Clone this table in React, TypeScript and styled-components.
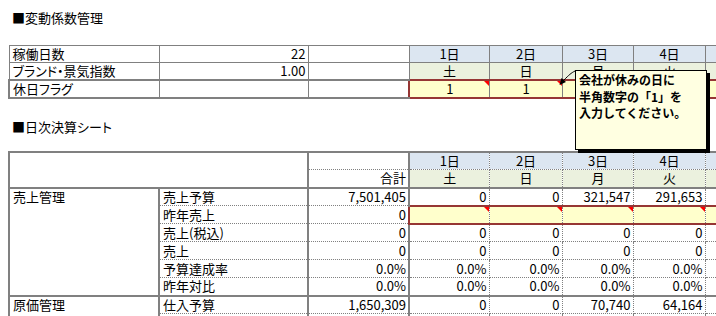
import styled, { createGlobalStyle, css } from 'styled-components'

const GRAY = '#808080'
const RED_LINE = '#963634'
const BLUE = '#dce6f1'
const GREEN = '#ebf1de'
const YELLOW = '#ffffcc'
const COLS = [150, 149, 101, 80, 73, 71, 72, 72]

const EDGES = {
  thin: `1px solid ${GRAY}`,
  thick: `2px solid ${GRAY}`,
  dot: `1px dotted ${GRAY}`,
  red: `2px solid ${RED_LINE}`,
  none: 'none',
}
type Edge = keyof typeof EDGES

const GlobalStyle = createGlobalStyle`
  html, body {
    margin: 0;
    padding: 0;
    background: #fff;
    overflow: hidden;
  }
  body {
    font-family: "Noto Sans CJK JP", "Noto Sans", sans-serif;
    font-size: 13px;
    color: #000;
  }
`

const Sheet = styled.div`
  position: relative;
  width: 716px;
  height: 316px;
  overflow: hidden;
  box-sizing: border-box;
  padding: 9px 0 0 8px;
`

const Heading = styled.div<{ $top: number; $bottom: number }>`
  height: 18px;
  line-height: 18px;
  padding-left: 4px;
  margin: ${(p) => p.$top}px 0 ${(p) => p.$bottom}px;
  font-feature-settings: 'palt';
  white-space: nowrap;
`

const Grid = styled.table<{ $dotted?: boolean }>`
  border-collapse: collapse;
  table-layout: fixed;
  width: ${COLS.reduce((a, b) => a + b, 0)}px;

  td {
    border: 1px ${(p) => (p.$dotted ? 'dotted' : 'solid')} ${GRAY};
  }
`

const Row = styled.tr<{ $h?: number }>`
  height: ${(p) => p.$h ?? 18}px;
`

interface CellProps {
  $t?: Edge
  $b?: Edge
  $l?: Edge
  $r?: Edge
  $bg?: string
  $align?: 'left' | 'right' | 'center'
  $mark?: boolean
  $top?: boolean
}

const Cell = styled.td<CellProps>`
  && {
    ${(p) => p.$t && `border-top: ${EDGES[p.$t]};`}
    ${(p) => p.$b && `border-bottom: ${EDGES[p.$b]};`}
    ${(p) => p.$l && `border-left: ${EDGES[p.$l]};`}
    ${(p) => p.$r && `border-right: ${EDGES[p.$r]};`}
  }
  position: relative;
  padding: 0 2px 0 3px;
  line-height: 14px;
  text-align: ${(p) => p.$align ?? 'left'};
  vertical-align: ${(p) => (p.$top ? 'top' : 'middle')};
  background: ${(p) => p.$bg ?? '#fff'};
  white-space: nowrap;
  font-feature-settings: 'palt';

  ${(p) =>
    p.$top &&
    css`
      padding-top: 1px;
    `}

  ${(p) =>
    p.$mark &&
    css`
      &::after {
        content: '';
        position: absolute;
        top: 0;
        right: 0;
        border-top: 5px solid #ff0000;
        border-left: 5px solid transparent;
      }
    `}
`

const Note = styled.div`
  position: absolute;
  left: 575px;
  top: 70px;
  width: 127px;
  height: 77px;
  border: 1px solid #000;
  background: #ffffe1;
  box-shadow: 3px 3px 0 #000;
  padding: 1px 0 0 3px;
  font-size: 12px;
  font-weight: bold;
  line-height: 16.5px;
  white-space: nowrap;
`

const Pointer = styled.svg`
  position: absolute;
  left: 550px;
  top: 64px;
`

const DAYS = ['1日', '2日', '3日', '4日', '5日']
const WEEK = ['土', '日', '月', '火', '水']

const SALES: { label: string; total: string; days: string[]; input?: boolean }[] = [
  { label: '売上予算', total: '7,501,405', days: ['0', '0', '321,547', '291,653', '285,214'] },
  { label: '昨年売上', total: '0', days: ['', '', '', '', ''], input: true },
  { label: '売上(税込)', total: '0', days: ['0', '0', '0', '0', '0'] },
  { label: '売上', total: '0', days: ['0', '0', '0', '0', '0'] },
  { label: '予算達成率', total: '0.0%', days: ['0.0%', '0.0%', '0.0%', '0.0%', '0.0%'] },
  { label: '昨年対比', total: '0.0%', days: ['0.0%', '0.0%', '0.0%', '0.0%', '0.0%'] },
]

const COST = [
  { label: '仕入予算', total: '1,650,309', days: ['0', '0', '70,740', '64,164', '62,747'] },
  { label: '仕入実績', total: '0', days: ['0', '0', '0', '0', '0'] },
]

function Cols() {
  return (
    <colgroup>
      {COLS.map((w, i) => (
        <col key={i} style={{ width: w }} />
      ))}
    </colgroup>
  )
}

function VariableTable() {
  return (
    <Grid>
      <Cols />
      <tbody>
        <Row $h={17}>
          <Cell>稼働日数</Cell>
          <Cell $align="right">22</Cell>
          <Cell />
          {DAYS.map((d) => (
            <Cell key={d} $bg={BLUE} $align="center">
              {d}
            </Cell>
          ))}
        </Row>
        <Row $h={17}>
          <Cell>ブランド・景気指数</Cell>
          <Cell $align="right">1.00</Cell>
          <Cell />
          {WEEK.map((w) => (
            <Cell key={w} $bg={GREEN} $align="center">
              {w}
            </Cell>
          ))}
        </Row>
        <Row $h={18}>
          <Cell $t="thick" $b="thick" $l="thick">
            休日フラグ
          </Cell>
          <Cell $t="thick" $b="thick" />
          <Cell $t="thick" $b="thick" />
          {['1', '1', '', '', ''].map((v, i) => (
            <Cell
              key={i}
              $t="red"
              $b="red"
              $l={i === 0 ? 'red' : undefined}
              $bg={YELLOW}
              $align="center"
              $mark={i < 2}
            >
              {v}
            </Cell>
          ))}
        </Row>
      </tbody>
    </Grid>
  )
}

function DailyTable() {
  return (
    <Grid $dotted>
      <Cols />
      <tbody>
        <Row>
          <Cell colSpan={2} rowSpan={2} $t="thick" $l="thick" $b="thick" $r="thick" />
          <Cell $t="thick" $l="thick" $r="none" />
          {DAYS.map((d, i) => (
            <Cell key={d} $t="thick" $l={i === 0 ? 'thick' : undefined} $bg={BLUE} $align="center">
              {d}
            </Cell>
          ))}
        </Row>
        <Row>
          <Cell $l="thick" $r="none" $b="thick" $align="right">
            合計
          </Cell>
          {WEEK.map((w, i) => (
            <Cell key={w} $b="thick" $l={i === 0 ? 'thick' : undefined} $bg={GREEN} $align="center">
              {w}
            </Cell>
          ))}
        </Row>
        {SALES.map((r, ri) => (
          <Row key={r.label}>
            {ri === 0 && (
              <Cell rowSpan={SALES.length} $l="thick" $r="thick" $b="thick" $top>
                売上管理
              </Cell>
            )}
            <Cell>{r.label}</Cell>
            <Cell $l="thick" $r="none" $align="right">
              {r.total}
            </Cell>
            {r.days.map((v, i) => (
              <Cell
                key={i}
                $align="right"
                $t={r.input ? 'red' : undefined}
                $b={r.input ? 'red' : undefined}
                $l={i === 0 ? (r.input ? 'red' : 'thick') : undefined}
                $bg={r.input ? YELLOW : undefined}
                $mark={r.input}
              >
                {v}
              </Cell>
            ))}
          </Row>
        ))}
        {COST.map((r, ri) => (
          <Row key={r.label}>
            {ri === 0 && (
              <Cell rowSpan={COST.length} $t="thick" $l="thick" $r="thick" $top>
                原価管理
              </Cell>
            )}
            <Cell $t={ri === 0 ? 'thick' : undefined}>{r.label}</Cell>
            <Cell $t={ri === 0 ? 'thick' : undefined} $l="thick" $r="none" $align="right">
              {r.total}
            </Cell>
            {r.days.map((v, i) => (
              <Cell
                key={i}
                $t={ri === 0 ? 'thick' : undefined}
                $l={i === 0 ? 'thick' : undefined}
                $align="right"
              >
                {v}
              </Cell>
            ))}
          </Row>
        ))}
      </tbody>
    </Grid>
  )
}

export default function App() {
  return (
    <>
      <GlobalStyle />
      <Sheet>
        <Heading $top={0} $bottom={18}>
          ■変動係数管理
        </Heading>
        <VariableTable />
        <Heading $top={19} $bottom={15}>
          ■日次決算シート
        </Heading>
        <DailyTable />

        <Pointer width="30" height="26" viewBox="0 0 30 26">
          <path d="M25 7 C21 9 19 11 14 16" fill="none" stroke="#000" strokeWidth="1" />
          <polygon points="9.5,21 11.5,14 16,18" fill="#000" />
        </Pointer>
        <Note>
          会社が休みの日に
          <br />
          半角数字の「1」を
          <br />
          入力してください。
        </Note>
      </Sheet>
    </>
  )
}
